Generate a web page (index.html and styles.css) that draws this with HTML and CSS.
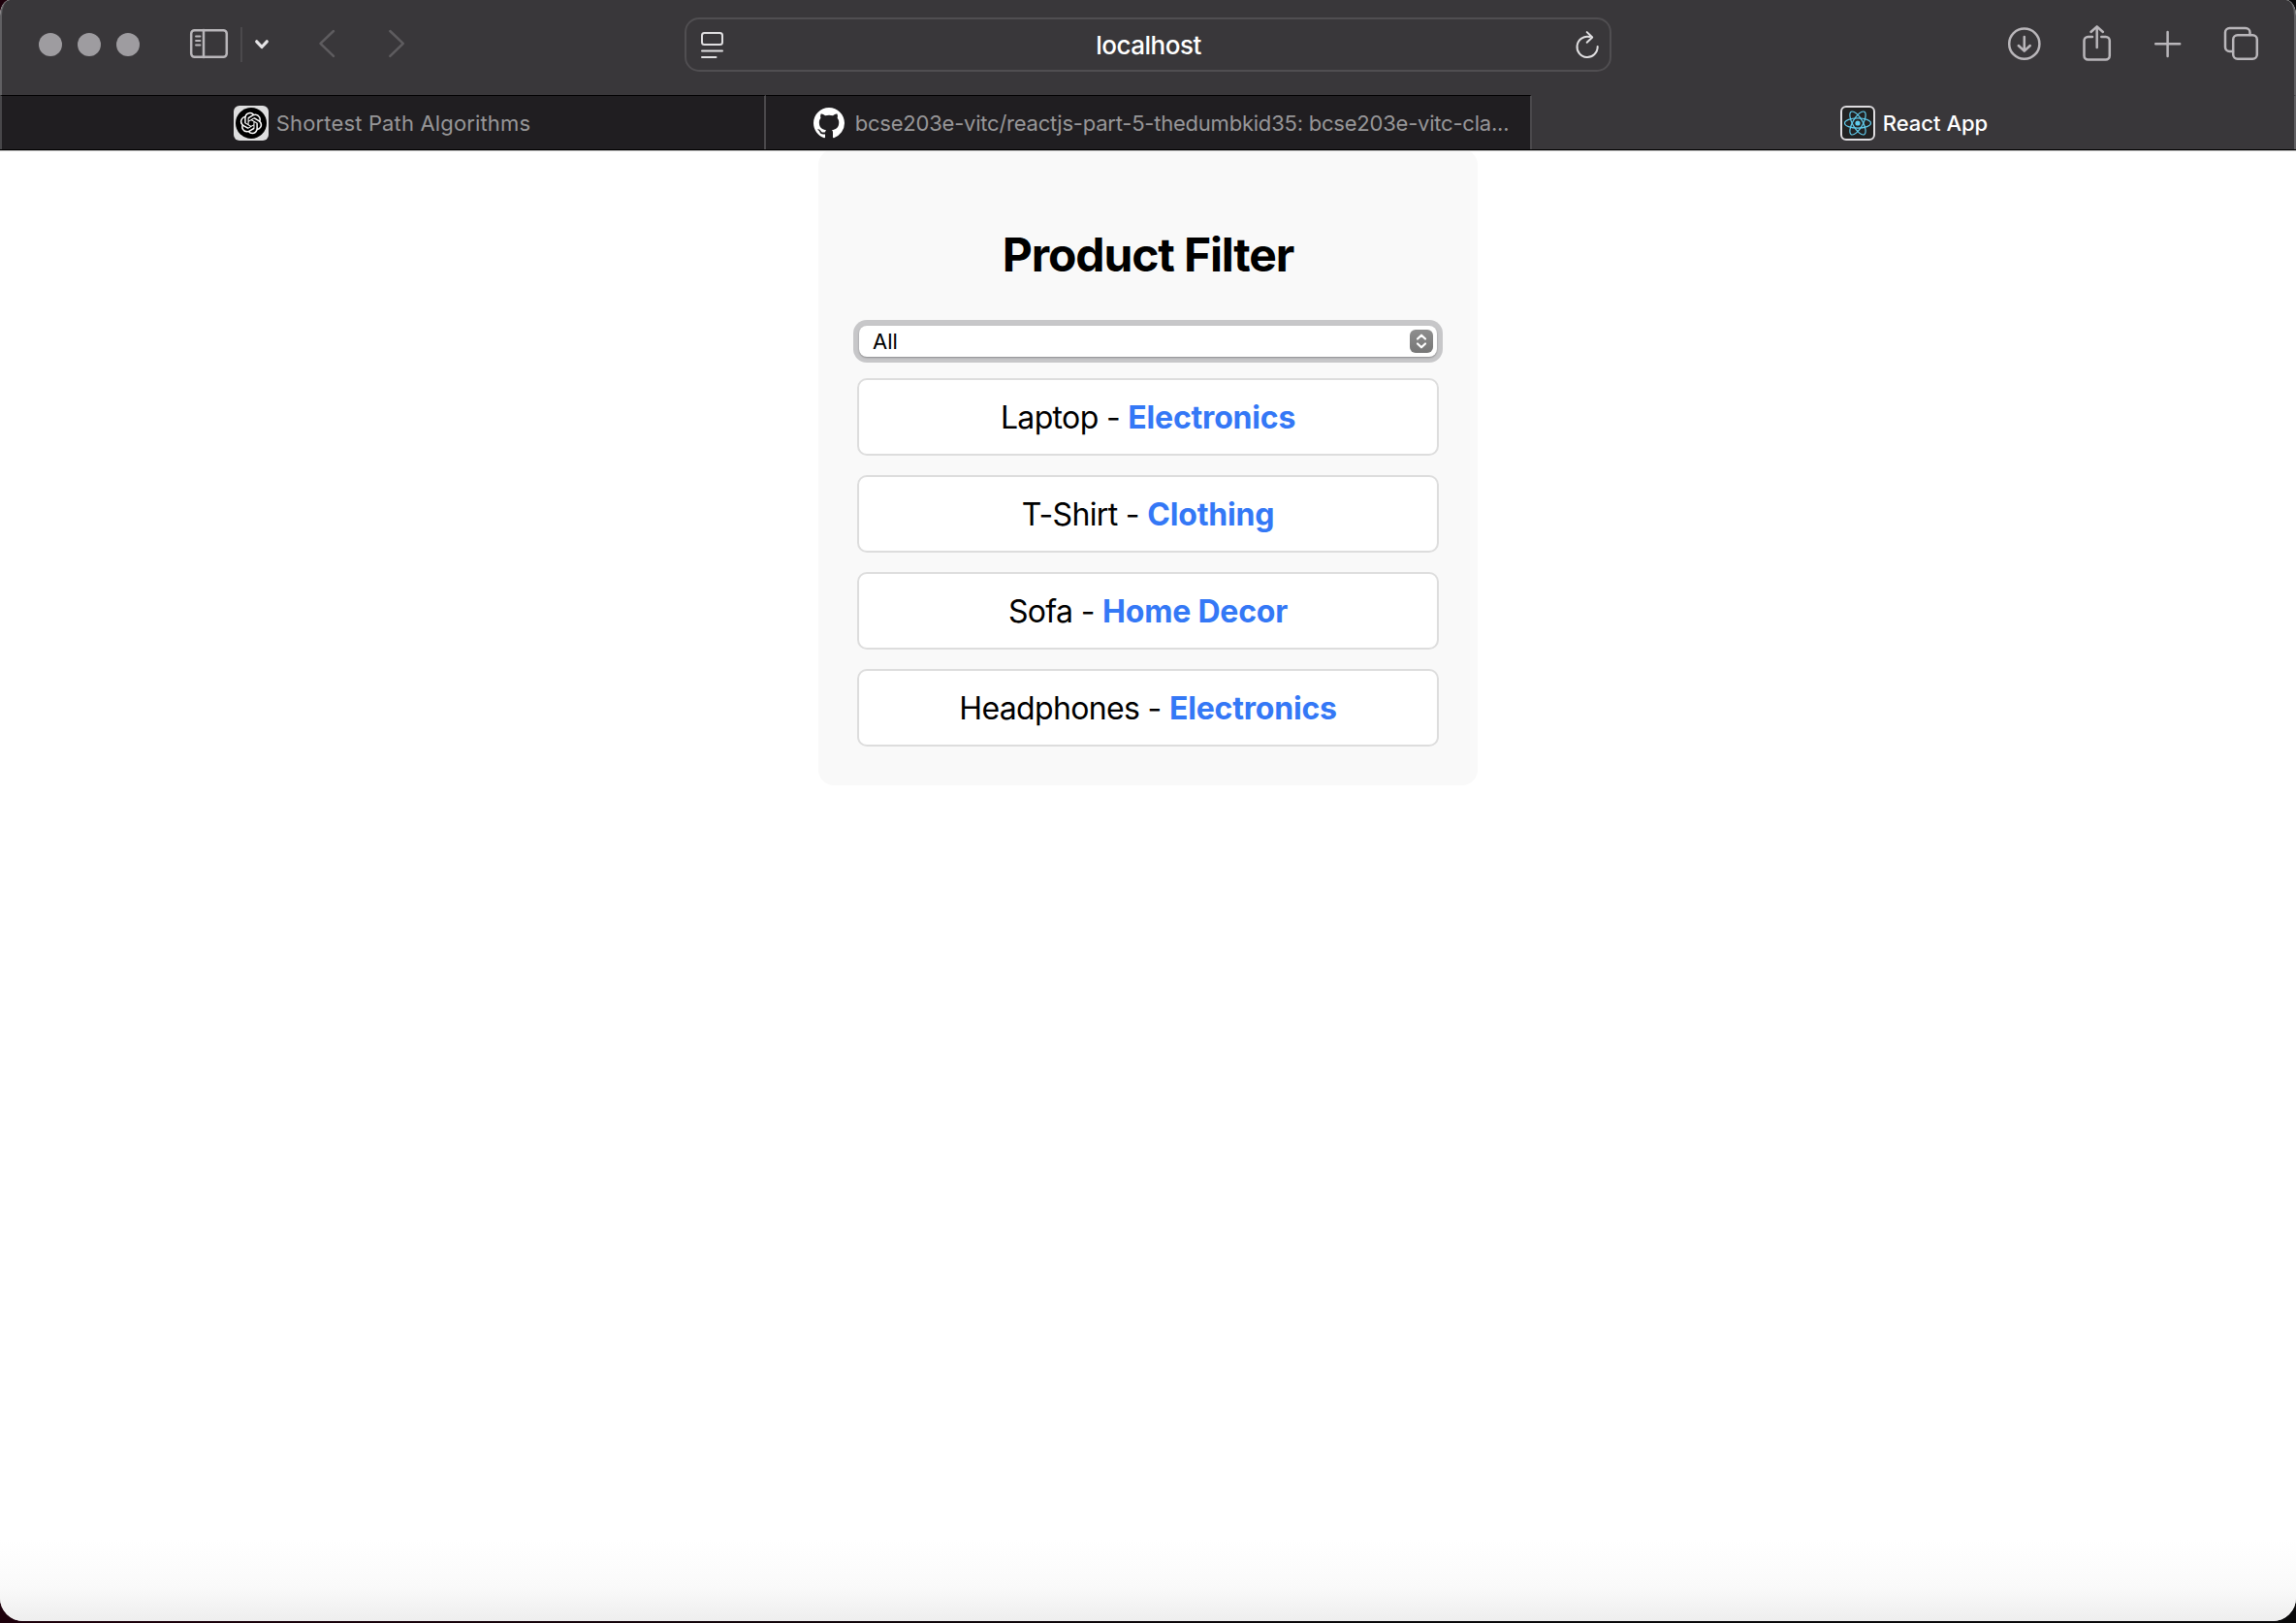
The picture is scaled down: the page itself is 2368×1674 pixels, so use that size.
FILE: index.html
```html
<!DOCTYPE html>
<html lang="en">
<head>
<meta charset="utf-8">
<title>React App</title>
<link rel="stylesheet" href="styles.css">
</head>
<body>
<div class="window">
  <header class="toolbar">
    <div class="nav">
      <span class="light"></span><span class="light"></span><span class="light"></span>
      <svg class="icon sidebar" width="46" height="44" viewBox="192 24 46 44"><rect x="197.2" y="31.2" width="36.6" height="27.6" rx="3.5"/><path d="M210 31v28"/><path class="thin" d="M202 37.5h4.5M202 42h4.5M202 46.5h4.5"/></svg>
      <span class="divider"></span>
      <svg class="icon bright" width="20" height="20" viewBox="260 36 20 20"><path d="M264.7 42.8l5.3 5.7 5.3-5.7"/></svg>
      <svg class="icon faint back" width="24" height="36" viewBox="325 27 24 36"><path d="M344 32l-13.5 12.8L344 57.8"/></svg>
      <svg class="icon faint forward" width="24" height="36" viewBox="397 27 24 36"><path d="M402.3 32l13.5 12.8-13.5 13"/></svg>
    </div>
    <div class="address">
      <svg class="icon page" width="26" height="30" viewBox="721 31 26 30"><rect x="724" y="34" width="21" height="12" rx="2.5"/><path d="M724 52.4h21M724 59h14.5"/></svg>
      <span class="host">localhost</span>
      <svg class="icon page" width="26" height="32" viewBox="1624 30.5 26 32"><path d="M1647.7 48.6a10.6 10.6 0 1 1-8.2-10.1M1636.7 33.6l5.5 5.4-5.5 5.2"/></svg>
    </div>
    <div class="actions">
      <svg class="icon" width="36" height="36" viewBox="2070 27 36 36"><circle cx="2087.8" cy="45.2" r="15.6"/><path d="M2087.8 38v14M2081.8 47l6 5.7 6-5.7"/></svg>
      <svg class="icon" width="34" height="42" viewBox="2146 24 34 42"><path d="M2158 38h-4.500a4 4 0 0 0-4 4v15.500a4 4 0 0 0 4 4h18.300a4 4 0 0 0 4-4V42a4 4 0 0 0-4-4h-4.500M2162.700 49V27.500M2156.500 33l6.200-5.700 6.200 5.700"/></svg>
      <svg class="icon" width="32" height="32" viewBox="2220 28 32 32"><path d="M2223.200 44.300h25M2235.600 31.900v25"/></svg>
      <svg class="icon" width="40" height="40" viewBox="2292 25 40 40"><path d="M2303 53h-3.500a4.500 4.500 0 0 1-4.500-4.500V33.500a4.500 4.500 0 0 1 4.500-4.500h16.500a4.500 4.500 0 0 1 4.500 4.500V36"/><rect x="2303.200" y="36.200" width="24.600" height="24.600" rx="4.500"/></svg>
    </div>
  </header>
  <nav class="tabs">
    <div class="tab">
      <svg width="36" height="36" viewBox="0 0 36 36"><rect width="36" height="36" rx="6" fill="#dededf"/><circle cx="18" cy="18" r="16"/><path transform="translate(6.800 6.800) scale(.935)" fill="#fff" d="M22.282 9.821a5.985 5.985 0 0 0-.516-4.910 6.046 6.046 0 0 0-6.510-2.900A6.065 6.065 0 0 0 4.981 4.182a5.985 5.985 0 0 0-3.998 2.900 6.046 6.046 0 0 0 .743 7.097 5.980 5.980 0 0 0 .510 4.911 6.051 6.051 0 0 0 6.515 2.900A5.985 5.985 0 0 0 13.260 24a6.056 6.056 0 0 0 5.772-4.206 5.990 5.990 0 0 0 3.998-2.900 6.056 6.056 0 0 0-.748-7.073zM13.260 22.430a4.476 4.476 0 0 1-2.876-1.041l.141-.080 4.779-2.758a.795.795 0 0 0 .393-.681v-6.737l2.020 1.169a.071.071 0 0 1 .038.052v5.583a4.504 4.504 0 0 1-4.495 4.493zM3.600 18.304a4.471 4.471 0 0 1-.535-3.014l.142.085 4.783 2.759a.771.771 0 0 0 .781 0l5.843-3.369v2.332a.080.080 0 0 1-.033.062L9.740 19.950a4.500 4.500 0 0 1-6.140-1.646zM2.341 7.896a4.485 4.485 0 0 1 2.366-1.973V11.600a.766.766 0 0 0 .388.677l5.815 3.355-2.020 1.168a.076.076 0 0 1-.071 0l-4.830-2.786A4.504 4.504 0 0 1 2.341 7.872zm16.597 3.855l-5.833-3.387L15.119 7.200a.076.076 0 0 1 .071 0l4.830 2.791a4.494 4.494 0 0 1-.677 8.105v-5.678a.790.790 0 0 0-.405-.667zm2.011-3.023l-.142-.085-4.774-2.782a.776.776 0 0 0-.785 0L9.409 9.230V6.897a.066.066 0 0 1 .028-.061l4.830-2.787a4.500 4.500 0 0 1 6.682 4.660zM8.307 12.863l-2.020-1.164a.080.080 0 0 1-.038-.057V6.075a4.500 4.500 0 0 1 7.376-3.454l-.142.081-4.779 2.758a.795.795 0 0 0-.393.681zm1.098-2.366l2.602-1.500 2.607 1.500v2.999l-2.598 1.500-2.607-1.500z"/></svg>
      <span class="label label-path">Shortest Path Algorithms</span>
    </div>
    <div class="tab tab-repo">
      <svg width="34" height="34" viewBox="0 0 34 34"><path transform="translate(1 1) scale(2)" fill="#fff" d="M8 0C3.580 0 0 3.580 0 8c0 3.540 2.290 6.530 5.470 7.590.4.070.55-.17.55-.38 0-.19-.01-.82-.01-1.490-2.010.37-2.530-.49-2.690-.94-.09-.23-.48-.94-.82-1.130-.28-.15-.68-.52-.01-.53.63-.01 1.080.58 1.230.82.72 1.210 1.870.87 2.330.66.07-.52.28-.87.51-1.070-1.780-.2-3.640-.89-3.640-3.950 0-.87.31-1.590.82-2.150-.08-.2-.36-1.020.08-2.120 0 0 .67-.21 2.200.82.64-.18 1.320-.27 2-.27s1.360.09 2 .27c1.530-1.040 2.200-.82 2.200-.82.44 1.100.16 1.920.08 2.120.51.56.82 1.270.82 2.150 0 3.070-1.870 3.750-3.650 3.950.29.25.54.73.54 1.480 0 1.070-.01 1.930-.01 2.200 0 .21.15.46.55.38A8.013 8.013 0 0 0 16 8c0-4.420-3.580-8-8-8z"/></svg>
      <span class="label label-repo">bcse203e-vitc/reactjs-part-5-thedumbkid35: bcse203e-vitc-cla...</span>
    </div>
    <div class="tab active">
      <svg width="36" height="36" viewBox="0 0 36 36"><rect x="1" y="1" width="34" height="34" rx="5" fill="#222" stroke="#dedcdf" stroke-width="2"/><g fill="none" stroke="#61cdee" stroke-width="1.200"><ellipse cx="18" cy="18" rx="13.500" ry="5.200"/><ellipse cx="18" cy="18" rx="13.500" ry="5.200" transform="rotate(60 18 18)"/><ellipse cx="18" cy="18" rx="13.500" ry="5.200" transform="rotate(120 18 18)"/></g><circle cx="18" cy="18" r="2.600" fill="#61cdee"/></svg>
      <span class="label label-react">React App</span>
    </div>
  </nav>
  <main class="page-view">
    <section class="card">
      <h1>Product Filter</h1>
      <div class="select" role="combobox" aria-label="Category">
        <span>All</span>
        <svg width="24" height="24" viewBox="0 0 24 24"><defs><linearGradient id="knob" x2="0" y2="1"><stop stop-color="#8e8e8e"/><stop offset="1" stop-color="#767676"/></linearGradient></defs><rect width="24" height="24" rx="6" fill="url(#knob)"/><path d="M8 9.500l4-3.800 4 3.800M8 14.500l4 3.800 4-3.800" fill="none" stroke="#fff" stroke-width="2.200" stroke-linecap="round" stroke-linejoin="round"/></svg>
      </div>
      <ul class="products">
        <li><p>Laptop - <strong>Electronics</strong></p></li>
        <li><p>T-Shirt - <strong>Clothing</strong></p></li>
        <li><p>Sofa - <strong>Home Decor</strong></p></li>
        <li><p>Headphones - <strong>Electronics</strong></p></li>
      </ul>
    </section>
  </main>
</div>
</body>
</html>
```
FILE: styles.css
```css
* { box-sizing: border-box; }
body {
  margin: 0;
  background: linear-gradient(90deg, #1d000b, #09090a 60%);
  font-family: Inter, "Liberation Sans", sans-serif;
  color: #000;
}
.window {
  width: 2368px;
  height: 1672px;
  display: flex;
  flex-direction: column;
  overflow: hidden;
  border-radius: 10px 10px 24px 24px / 16px 16px 24px 24px;
  background: #fff;
}
.toolbar {
  height: 98px;
  flex: none;
  display: flex;
  align-items: flex-start;
  background: #39373a;
  border: solid #616063;
  border-width: 0 2px;
  border-radius: 10px 10px 0 0 / 16px 16px 0 0;
}
.icon {
  flex: none;
  fill: none;
  stroke: #b9b6ba;
  stroke-width: 2.5;
  stroke-linecap: round;
  stroke-linejoin: round;
}
.icon .thin { stroke-width: 1.8; }
.nav { width: 704px; height: 90px; padding-left: 38px; display: flex; align-items: center; }
.light { width: 24px; height: 24px; margin: 2px 16px 0 0; border-radius: 50%; background: #9e9ca0; }
.sidebar { margin: 2px 10px 0 32px; }
.divider { width: 2px; height: 36px; margin: 2px 10px 0 0; background: #4b494c; }
.bright { stroke: #e5e4e6; stroke-width: 3.2; margin-top: 2px; }
.faint { stroke: #5e5c5f; }
.back { margin-left: 45px; }
.forward { margin-left: 48px; }
.address {
  width: 956px;
  height: 56px;
  margin-top: 18px;
  padding: 0 10px 0 13px;
  display: flex;
  align-items: center;
  justify-content: space-between;
  border: 2px solid #504e51;
  border-radius: 15px;
}
.page { stroke: #e0dfe1; stroke-width: 2; }
.host { padding: 2px 2px 0 0; color: #fff; font-size: 26px; line-height: 32px; font-weight: 450; letter-spacing: -0.5px; }
.actions { height: 90px; margin-left: 408px; display: flex; align-items: center; gap: 40px; }
.tabs {
  height: 57px;
  flex: none;
  display: grid;
  grid-template-columns: 790px 790px 788px;
  background: #201e21;
  border-bottom: 1px solid #000;
}
.tab {
  display: flex;
  align-items: center;
  justify-content: center;
  gap: 8px;
  border-top: 1px solid #000;
  border-right: 2px solid #4b494c;
  color: #979698;
}
.tab:first-child { padding-right: 2px; border-left: 2px solid #48474a; }
.tab-repo { gap: 10px; padding-left: 26px; }
.tab.active { padding-left: 2px; background: #39373a; border-top-color: #39373a; border-right-color: #616063; color: #fff; }
.label { font-size: 22px; line-height: 28px; white-space: nowrap; }
.label-path { letter-spacing: 0.15px; }
.label-repo { letter-spacing: -0.22px; }
.label-react { font-weight: 500; }
.page-view {
  flex: 1;
  overflow: hidden;
  border-top: 1px solid #c5c5c5;
  background: linear-gradient(#fff calc(100% - 84px), #fafafa calc(100% - 36px), #eee);
}
.card {
  width: 680px;
  height: 656px;
  margin: -2px auto 0;
  padding: 80px 40px 40px;
  border-radius: 16px;
  background: #f9f9f9;
}
h1 { margin: 0; font-size: 48px; line-height: 58px; text-align: center; letter-spacing: -1.15px; white-space: nowrap; }
.select {
  height: 32px;
  margin: 44px 2px 22px;
  padding: 0 4px 0 14px;
  display: flex;
  align-items: center;
  justify-content: space-between;
  border-radius: 8px;
  background: #fff;
  box-shadow: 0 1px 2px #8b8b8d, 0 0 0 6px #c7c7c9;
  font-size: 22px;
}
.products { margin: 0; padding: 0; list-style: none; display: grid; gap: 20px; }
.products li {
  height: 80px;
  padding-top: 2px;
  display: flex;
  align-items: center;
  justify-content: center;
  border: 2px solid #ddd;
  border-radius: 10px;
  background: #fff;
}
.products p { margin: 0; font-size: 32px; line-height: 40px; white-space: nowrap; letter-spacing: -0.65px; }
.products strong { color: #3478f6; font-weight: 700; letter-spacing: -0.2px; }
```
